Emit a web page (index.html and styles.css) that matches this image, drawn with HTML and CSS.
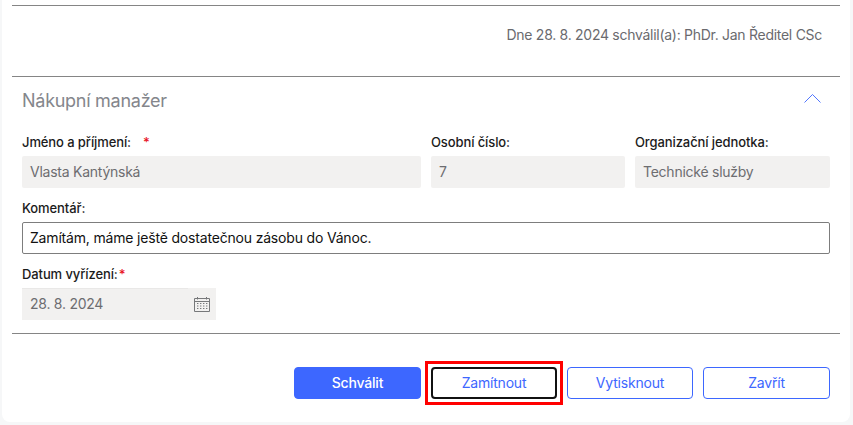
FILE: index.html
```html
<!DOCTYPE html>
<html lang="cs">
<head>
<meta charset="utf-8">
<title>Nákupní manažer</title>
<link rel="stylesheet" href="styles.css">
</head>
<body>
<main class="card">
  <section class="approved">
    <p class="approved-text">Dne 28. 8. 2024 schválil(a): PhDr. Jan Ředitel CSc</p>
  </section>
  <section class="panel">
    <header class="panel-head">
      <h2 class="panel-title">Nákupní manažer</h2>
      <svg class="chevron" viewBox="0 0 17 10" width="17" height="10" aria-hidden="true"><path d="M.5 9.500 8.500 1.500l8 8" fill="none" stroke="#3d67ff" stroke-width=".9"/></svg>
    </header>
    <div class="grid">
      <div class="field">
        <label class="label">Jméno a příjmení:<span class="req req-wide">*</span></label>
        <div class="readonly">Vlasta Kantýnská</div>
      </div>
      <div class="field">
        <label class="label">Osobní číslo:</label>
        <div class="readonly">7</div>
      </div>
      <div class="field">
        <label class="label">Organizační jednotka:</label>
        <div class="readonly">Technické služby</div>
      </div>
    </div>
    <div class="field comment">
      <label class="label">Komentář:</label>
      <div class="textbox">Zamítám, máme ještě dostatečnou zásobu do Vánoc.</div>
    </div>
    <div class="field date">
      <label class="label">Datum vyřízení:<span class="req req-tight">*</span></label>
      <div class="datebox">
        <div class="readonly dateval">28. 8. 2024</div>
        <div class="dateicon">
          <svg viewBox="0 0 16 16" width="16" height="16" aria-hidden="true">
            <path d="M.5 2.500h15v13H.5zM.5 5.500h15M3.500 1v2.500M12.500 1v2.500" fill="none" stroke="#77787a" stroke-width="1"/>
            <path d="M3 7.500h1.400M6 7.500h1.400M9 7.500h1.400M12 7.500h1.400M3 10h1.400M6 10h1.400M9 10h1.400M12 10h1.400M3 12.500h1.400M6 12.500h1.400M9 12.500h1.400M12 12.500h1.400" stroke="#77787a" stroke-width="1" fill="none"/>
          </svg>
        </div>
      </div>
    </div>
  </section>
  <footer class="actions">
    <button class="btn wide primary" type="button">Schválit</button>
    <span class="highlight"><button class="btn focus" type="button">Zamítnout</button></span>
    <button class="btn" type="button">Vytisknout</button>
    <button class="btn wide" type="button">Zavřít</button>
  </footer>
</main>
</body>
</html>
```
FILE: styles.css
```css
* { box-sizing: border-box; }
html, body { margin: 0; height: 425px; overflow: hidden; }
body {
  background: #f6f7f8;
  font-family: Inter, "Liberation Sans", sans-serif;
  font-size: 14px;
  color: #1b1b1b;
}
.card {
  width: 848px;
  height: 422px;
  margin-left: 2px;
  padding: 5px 10px 0;
  background: #fff;
  border-radius: 0 0 8px 8px;
}
.approved {
  height: 71px;
  border-top: 1px solid #858585;
  padding-right: 18px;
  display: flex;
  justify-content: flex-end;
}
.approved-text {
  margin: 20px 0 0;
  line-height: 17px;
  font-size: 14px;
  letter-spacing: -.28px;
  color: #6a6a6e;
}
.panel {
  height: 258px;
  border-top: 1px solid #858585;
  border-bottom: 1px solid #858585;
  padding: 0 10px;
}
.panel-head {
  height: 49px;
  padding: 13px 9px 0 0;
  display: flex;
  justify-content: space-between;
}
.panel-title {
  margin: 0;
  font-size: 18px;
  line-height: 21px;
  font-weight: 400;
  letter-spacing: -.27px;
  color: #84868c;
}
.chevron { margin-top: 3px; }
.grid {
  display: grid;
  grid-template-columns: 399px 194px 195px;
  column-gap: 10px;
}
.label {
  display: block;
  height: 30px;
  padding-top: 8px;
  font-size: 13px;
  line-height: 17px;
  font-weight: 500;
  letter-spacing: -.1px;
}
.req { color: #e81123; margin-left: 2px; }
.req-wide { margin-left: 12px; }
.req-tight { margin-left: 1px; }
.readonly {
  height: 32px;
  padding: 0 8px;
  line-height: 32px;
  background: #f2f1f0;
  border-radius: 2px;
  color: #6d6d70;
  font-size: 14px;
  letter-spacing: -.25px;
}
.comment .label { height: 34px; padding-top: 12px; }
.textbox {
  height: 32px;
  padding: 0 7px;
  line-height: 30px;
  border: 1px solid #7d7d7d;
  border-radius: 2px;
  color: #111;
  font-size: 14px;
  letter-spacing: -.18px;
}
.date .label { height: 34px; padding-top: 12px; }
.datebox {
  width: 194px;
  height: 32px;
  display: flex;
  background: #f2f1f0;
}
.dateval {
  flex: 1;
  border-radius: 0;
  border-top: 1px solid #e9e8e7;
  line-height: 30px;
}
.dateicon {
  width: 28px;
  display: flex;
  align-items: center;
  justify-content: center;
}
.dateicon svg { display: block; }
.actions {
  display: flex;
  justify-content: flex-end;
  align-items: center;
  gap: 10px;
  padding: 33px 10px 0 0;
}
.btn {
  width: 126px;
  height: 32px;
  padding: 0;
  background: #fff;
  border: 1px solid #3d67ff;
  border-radius: 4px;
  color: #3d67ff;
  font: 400 14px/1 Inter, "Liberation Sans", sans-serif;
  letter-spacing: -.2px;
}
.wide { width: 127px; }
.primary {
  background: #3d67ff;
  color: #fff;
  font-weight: 500;
}
.focus { border: 2px solid #111; display: block; }
.highlight {
  margin: -6px -6px;
  padding: 3px;
  border: 3px solid #f00;
  display: block;
}
```
